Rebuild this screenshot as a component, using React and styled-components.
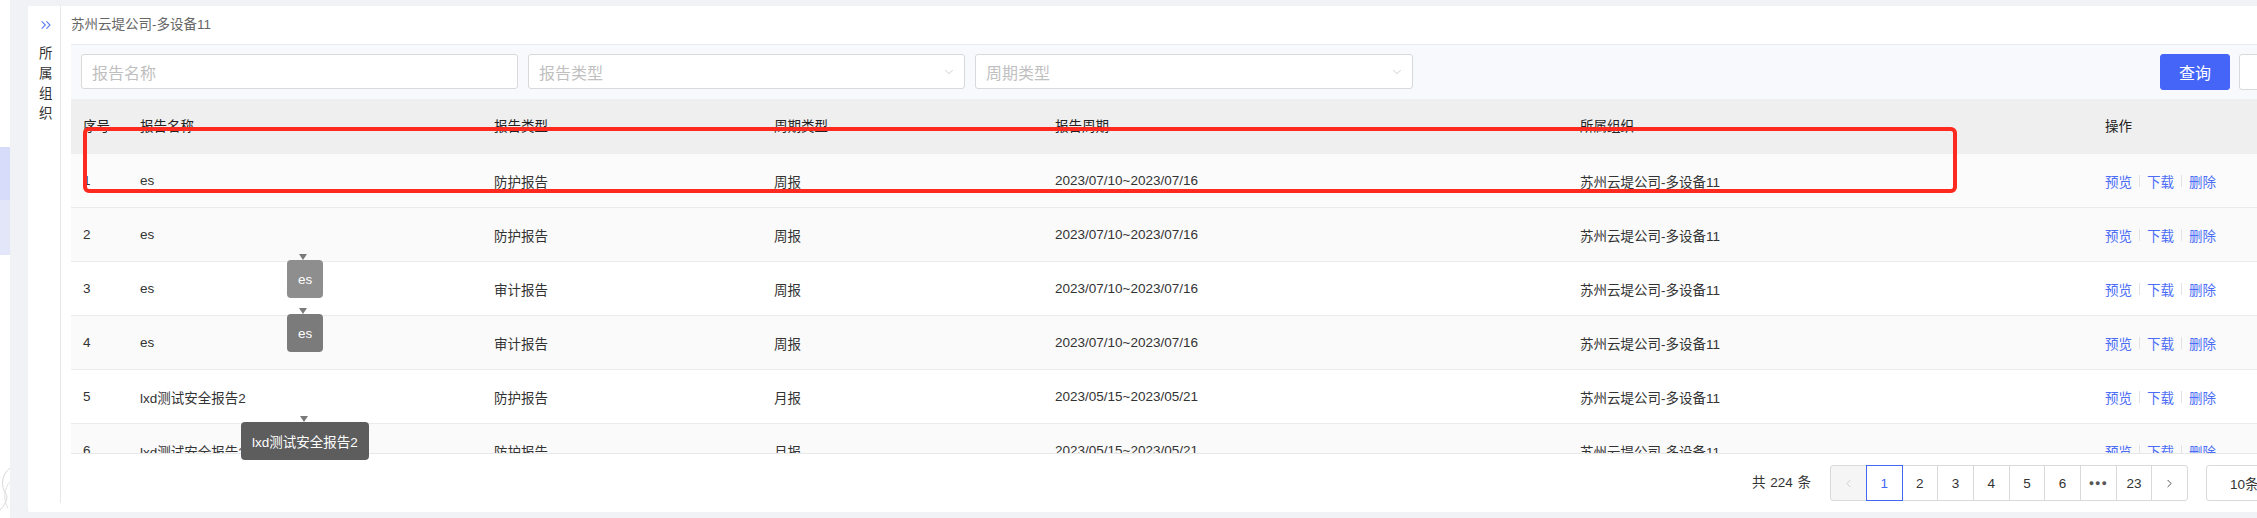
import React from "react";
import styled, { createGlobalStyle } from "styled-components";
import { ChevronsRight, ChevronDown, ChevronLeft, ChevronRight } from "lucide-react";

const GlobalStyle = createGlobalStyle`
html, body {
  margin:0;
  padding:0;
  background:#f0f2f5;
  overflow:hidden;
}
body {
  font-family:"Liberation Sans", "Noto Sans CJK SC", sans-serif;
  color:#333;
}
`;

const Page = styled.div`
display:flex;
width:2257px;
height:518px;
overflow:hidden;
`;

const SideNav = styled.div`
flex:none;
width:10px;
background:#fff;
display:flex;
flex-direction:column;
padding-top:147px;
box-sizing:border-box;
`;

const NavItem = styled.div`
height:${p => p.h}px;
background:${p => (p.active ? "#d6dcf9" : "#e3e6f9")};
`;

const NavDeco = styled.svg`
margin-top:auto;
display:block;
`;

const Main = styled.div`
flex:none;
padding:6px 0 6px 18px;
`;

const Card = styled.div`
width:2301px;
height:506px;
background:#fff;
display:flex;
border-radius:2px;
`;

const OrgPanel = styled.div`
flex:none;
width:33px;
margin-bottom:9px;
border-right:1px solid #e8e8e8;
box-sizing:border-box;
display:flex;
flex-direction:column;
padding:11px 0 0 10px;
gap:11px;
color:#5f7ff5;
`;

const OrgText = styled.div`
width:14px;
padding-left:1px;
font-size:13.5px;
line-height:20px;
color:#333;
word-break:break-all;
`;

const Content = styled.div`
flex:1;
min-width:0;
padding:0 10px;
display:flex;
flex-direction:column;
`;

const Crumb = styled.div`
height:38px;
line-height:38px;
font-size:13.5px;
color:#666;
`;

const Filter = styled.div`
height:55px;
box-sizing:border-box;
border-top:1px solid #e8ebf2;
background:#f8f9fd;
display:flex;
align-items:flex-start;
gap:10px;
padding:9px 10px 0;
`;

const Field = styled.div`
width:${p => p.w}px;
height:35px;
box-sizing:border-box;
border:1px solid #d9d9d9;
border-radius:3px;
background:#fff;
display:flex;
align-items:center;
justify-content:space-between;
padding:0 8px 0 10px;
font-size:16px;
color:#bfbfbf;
`;

const Spacer = styled.div`
flex:1;
`;

const Btn = styled.div`
width:70px;
height:36px;
box-sizing:border-box;
border-radius:3px;
display:flex;
align-items:center;
justify-content:center;
font-size:16px;
background:${p => (p.primary ? "#4465f8" : "#fff")};
color:${p => (p.primary ? "#fff" : "#333")};
border:1px solid ${p => (p.primary ? "#4465f8" : "#d9d9d9")};
margin-left:${p => (p.primary ? 0 : -1)}px;
`;

const Body = styled.div`
position:relative;
flex:1;
display:flex;
flex-direction:column;
`;

const TableWrap = styled.div`
height:354px;
overflow:hidden;
border-bottom:1px solid #e8e8e8;
`;

const cols = "57px 354px 280px 281px 525px 525px 1fr";

const HeadRow = styled.div`
display:grid;
grid-template-columns:${cols};
height:55px;
background:#efefef;
font-size:13.5px;
color:#222;
`;

const Row = styled.div`
display:grid;
grid-template-columns:${cols};
height:54px;
box-sizing:border-box;
border-bottom:1px solid #ebebeb;
background:${p => p.bg};
font-size:13.5px;
color:#333;
`;

const Cell = styled.div`
display:flex;
align-items:center;
padding:0 12px ${p => (p.head ? 4 : 0)}px;
white-space:nowrap;
`;

const Actions = styled.div`
display:flex;
align-items:center;
gap:7px;
color:#4a6cf7;
`;

const Sep = styled.span`
width:1px;
height:12px;
background:#e3e3e3;
`;

const Pagination = styled.div`
flex:1;
display:flex;
justify-content:flex-end;
align-items:flex-start;
padding:11px 13px 0 0;
font-size:13.5px;
color:#333;
`;

const Total = styled.div`
height:36px;
line-height:36px;
margin-right:19px;
word-spacing:1px;
`;

const Pager = styled.div`
display:flex;
margin-right:18px;
`;

const PageItem = styled.div`
width:36.7px;
height:36px;
box-sizing:border-box;
border:1px solid ${p => (p.active ? "#4466f5" : "#d9d9d9")};
margin-left:-1px;
position:relative;
z-index:${p => (p.active ? 1 : 0)};
display:flex;
align-items:center;
justify-content:center;
background:${p => (p.disabled ? "#f5f5f5" : "#fff")};
color:${p => (p.active ? "#4466f5" : p.disabled ? "#c5c5c5" : "#333")};
&:first-child { margin-left:0; border-radius:3px 0 0 3px; }
&:last-child { border-radius:0 3px 3px 0; }
`;

const Dots = styled.span`
font-size:9px;
letter-spacing:1px;
color:#555;
`;

const SizeSelect = styled.div`
width:100px;
height:36px;
box-sizing:border-box;
border:1px solid #d9d9d9;
border-radius:3px;
display:flex;
align-items:center;
padding-left:23px;
`;

const Mark = styled.div`
position:absolute;
left:12px;
top:28px;
width:1874px;
height:66px;
box-sizing:border-box;
border:4px solid #ff2a1f;
border-radius:6px;
pointer-events:none;
`;

const Tip = styled.div`
position:absolute;
left:${p => p.x}px;
top:${p => p.y}px;
height:38px;
box-sizing:border-box;
padding:0 ${p => p.pad}px;
border-radius:4px;
background:${p => p.bg};
color:#fff;
font-size:${p => p.size}px;
display:flex;
align-items:center;
white-space:nowrap;
`;

const TipArrow = styled.span`
position:absolute;
left:${p => p.x}px;
top:-6px;
width:0;
height:0;
border-left:4px solid transparent;
border-right:4px solid transparent;
border-top:6px solid #7a7a7a;
`;

const rows = [
  ["1", "es", "防护报告", "周报", "2023/07/10~2023/07/16", "#fbfbfb"],
  ["2", "es", "防护报告", "周报", "2023/07/10~2023/07/16", "#fafafa"],
  ["3", "es", "审计报告", "周报", "2023/07/10~2023/07/16", "#fff"],
  ["4", "es", "审计报告", "周报", "2023/07/10~2023/07/16", "#fafafa"],
  ["5", "lxd测试安全报告2", "防护报告", "月报", "2023/05/15~2023/05/21", "#fff"],
  ["6", "lxd测试安全报告2", "防护报告", "月报", "2023/05/15~2023/05/21", "#fafafa"],
];

const headers = ["序号", "报告名称", "报告类型", "周期类型", "报告周期", "所属组织", "操作"];

const App = () => {
  return (
    <Page>
      <GlobalStyle />
      <SideNav>
        <NavItem h={53} active />
        <NavItem h={55} />
        <NavDeco width="10" height="58" viewBox="0 0 10 58">
          <path d="M10 8 C2 14 0 26 6 34 C9 38 4 46 0 50" stroke="#d8d8d8" fill="none" strokeWidth="1" />
          <path d="M10 22 C4 28 3 40 8 48" stroke="#e2e2e2" fill="none" strokeWidth="1" />
        </NavDeco>
      </SideNav>
      <Main>
        <Card>
          <OrgPanel>
            <ChevronsRight size={16} strokeWidth={1.6} />
            <OrgText>所属组织</OrgText>
          </OrgPanel>
          <Content>
            <Crumb>苏州云堤公司-多设备11</Crumb>
            <Filter>
              <Field w={437}>报告名称</Field>
              <Field w={437}>
                报告类型
                <ChevronDown size={14} strokeWidth={1.3} />
              </Field>
              <Field w={438}>
                周期类型
                <ChevronDown size={14} strokeWidth={1.3} />
              </Field>
              <Spacer />
              <Btn primary>查询</Btn>
              <Btn>重置</Btn>
            </Filter>
            <Body>
              <TableWrap>
                <HeadRow>
                  {headers.map(h => (
                    <Cell head key={h}>{h}</Cell>
                  ))}
                </HeadRow>
                {rows.map(r => (
                  <Row key={r[0]} bg={r[5]}>
                    <Cell>{r[0]}</Cell>
                    <Cell>{r[1]}</Cell>
                    <Cell>{r[2]}</Cell>
                    <Cell>{r[3]}</Cell>
                    <Cell>{r[4]}</Cell>
                    <Cell>苏州云堤公司-多设备11</Cell>
                    <Cell>
                      <Actions>
                        <span>预览</span>
                        <Sep />
                        <span>下载</span>
                        <Sep />
                        <span>删除</span>
                      </Actions>
                    </Cell>
                  </Row>
                ))}
              </TableWrap>
              <Pagination>
                <Total>共 224 条</Total>
                <Pager>
                  <PageItem disabled><ChevronLeft size={13} strokeWidth={1.5} /></PageItem>
                  <PageItem active>1</PageItem>
                  <PageItem>2</PageItem>
                  <PageItem>3</PageItem>
                  <PageItem>4</PageItem>
                  <PageItem>5</PageItem>
                  <PageItem>6</PageItem>
                  <PageItem><Dots>●●●</Dots></PageItem>
                  <PageItem>23</PageItem>
                  <PageItem><ChevronRight size={13} strokeWidth={1.5} /></PageItem>
                </Pager>
                <SizeSelect>10条/页</SizeSelect>
              </Pagination>
              <Mark />
              <Tip x={216} y={161} pad={11} size={13.5} bg="#8e8e8e">
                <TipArrow x={12} />
                es
              </Tip>
              <Tip x={216} y={215} pad={11} size={13.5} bg="#7b7b7b">
                <TipArrow x={12} />
                es
              </Tip>
              <Tip x={170} y={323} pad={11} size={13.5} bg="#5d5d5d">
                <TipArrow x={59} />
                lxd测试安全报告2
              </Tip>
            </Body>
          </Content>
        </Card>
      </Main>
    </Page>
  );
};

export default App;
